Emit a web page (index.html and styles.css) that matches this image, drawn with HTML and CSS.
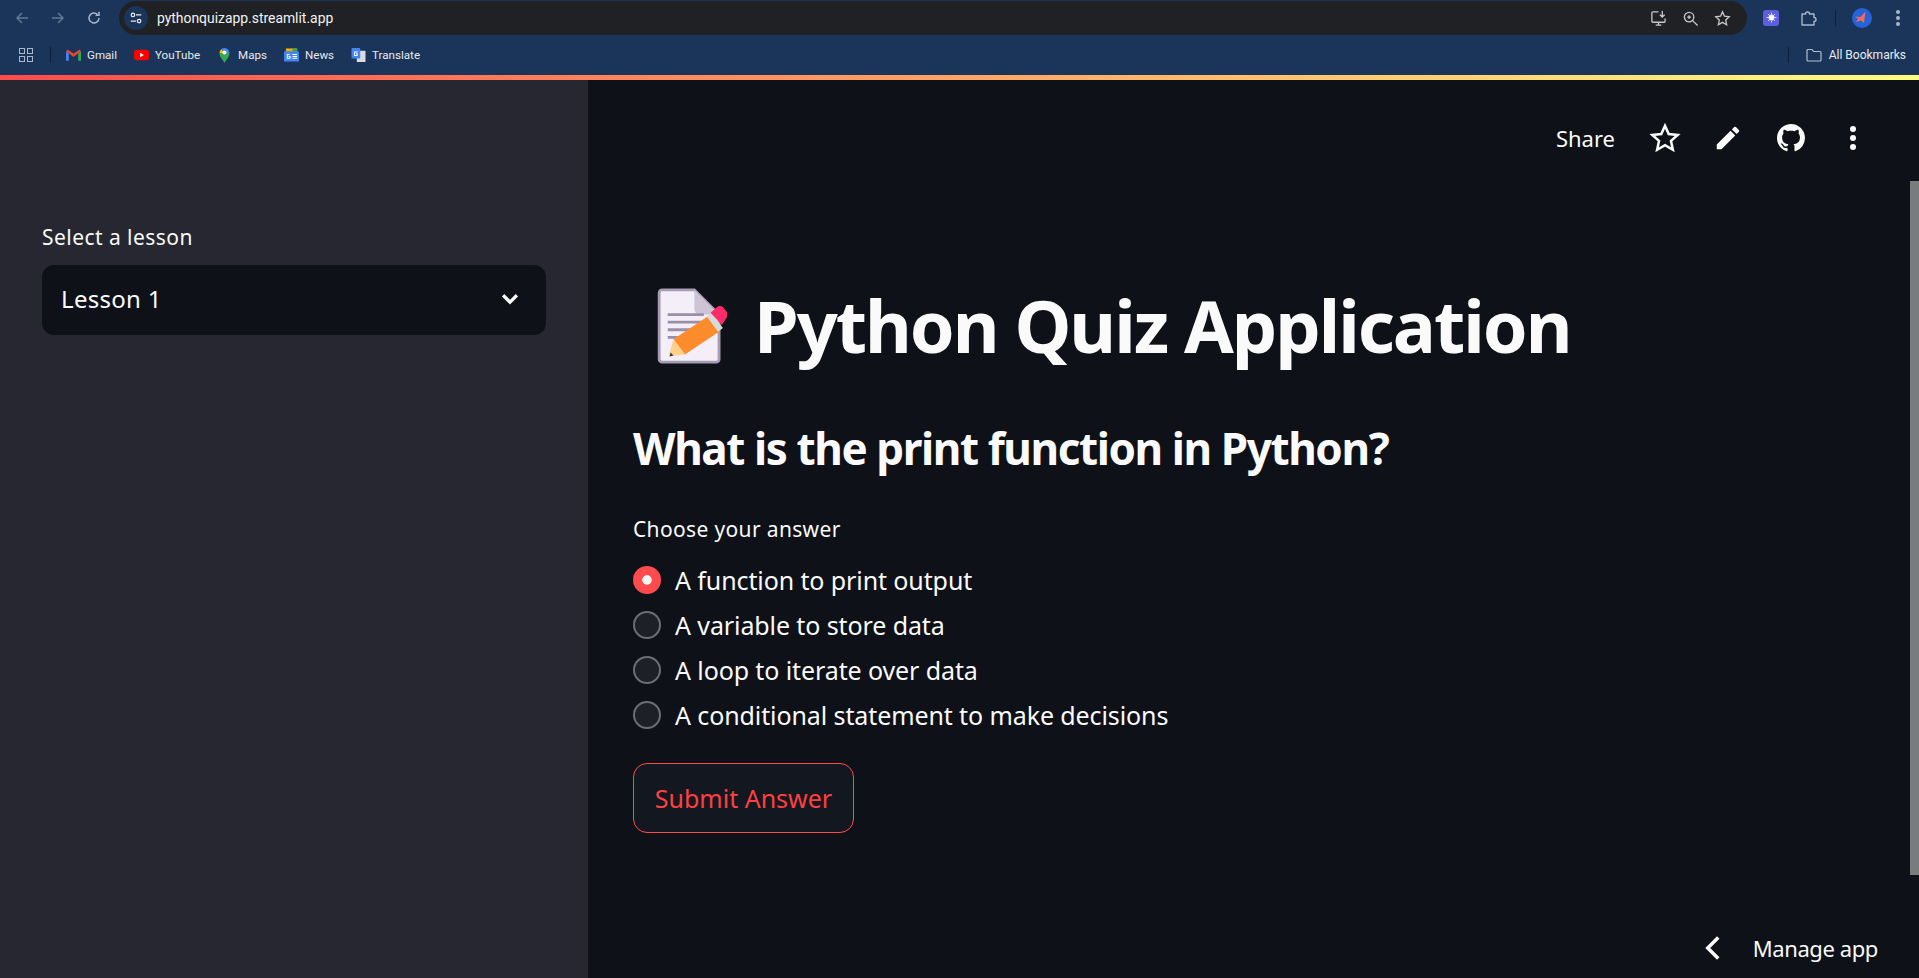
FILE: index.html
```html
<!DOCTYPE html>
<html lang="en">
<head>
    <meta charset="UTF-8">
    <title>Python Quiz Application</title>
    <link rel="stylesheet" href="styles.css">
</head>
<body>
    <div class="chrome">
        <div class="toolbar">
            <svg class="nav dim" viewBox="0 0 16 16"><path d="M14 8H3M8 3L3 8l5 5"/></svg>
            <svg class="nav dim" viewBox="0 0 16 16"><path d="M2 8h11M8 3l5 5-5 5"/></svg>
            <svg class="nav" viewBox="0 0 16 16"><path d="M13 8a5 5 0 1 1-1.6-3.7M13 1.800v3.400H9.600"/></svg>
            <div class="omnibox">
                <div class="tune">
                    <svg viewBox="0 0 16 16"><circle cx="4.500" cy="4.500" r="2"/><path d="M8 4.500h6M2 11.500h6"/><circle cx="11.500" cy="11.500" r="2"/></svg>
                </div>
                <span class="url">pythonquizapp.streamlit.app</span>
                <div class="omni-icons">
                    <svg viewBox="0 0 18 18"><path d="M9 2H3a1 1 0 0 0-1 1v9a1 1 0 0 0 1 1h12a1 1 0 0 0 1-1V9M13 1v6M10.500 5L13 7.500 15.500 5M6 16h6M9 13v3"/></svg>
                    <svg viewBox="0 0 18 18"><circle cx="7.500" cy="7.500" r="5"/><path d="M11 11l5.500 5.500M5.500 7.500h4M7.500 5.500v4"/></svg>
                    <svg viewBox="0 0 18 18"><path d="M9 2l2.100 4.600 5 .6-3.700 3.400 1 5L9 13.100 4.600 15.600l1-5L1.900 7.200l5-.6z"/></svg>
                </div>
            </div>
            <div class="ext-icon">
                <svg viewBox="0 0 16 16"><circle cx="8" cy="8" r="3.200"/><path d="M8 2v2.500M8 11.500V14M2 8h2.500M11.500 8H14M3.800 3.800l1.800 1.800M10.400 10.400l1.800 1.800M12.200 3.800l-1.800 1.800M5.600 10.400l-1.800 1.800"/></svg>
            </div>
            <svg class="puzzle" viewBox="0 0 18 18"><path d="M2 5h3.500a2 2 0 0 1 4 0H14v3.500a2 2 0 0 1 0 4V16H2v-3.500V5z"/></svg>
            <span class="sep"></span>
            <div class="avatar">
                <svg viewBox="0 0 20 20"><path d="M13.500 3.500L12 15l-3-2.500L4 14l2-3.500-3-2 5.500.5z"/></svg>
            </div>
            <div class="chrome-dots"><i></i><i></i><i></i></div>
        </div>
        <div class="bookmarks">
            <div class="apps"><i></i><i></i><i></i><i></i></div>
            <span class="sep"></span>
            <div class="bm">
                <svg viewBox="0 0 16 12"><path fill="#4285f4" d="M0 2v10h3V4z"/><path fill="#34a853" d="M13 4v8h3V2z"/><path fill="#ea4335" d="M0 2l8 6 8-6-1.500-2L8 4.500 1.500 0z"/></svg>
                Gmail
            </div>
            <div class="bm">
                <svg viewBox="0 0 16 12"><rect width="16" height="11" y="0.500" rx="3" fill="#f00"/><path fill="#fff" d="M6.500 3.500v5L10.500 6z"/></svg>
                YouTube
            </div>
            <div class="bm">
                <svg class="pin" viewBox="0 0 12 16"><path fill="#34a853" d="M6 16C4.500 13 1 10 1 6h10c0 4-3.500 7-5 10z"/><path fill="#fbbc04" d="M1 6a5 5 0 0 1 2-4l3 4z"/><path fill="#4285f4" d="M3 2a5 5 0 0 1 8 4H6z"/><circle cx="6" cy="5.500" r="2" fill="#fff"/></svg>
                Maps
            </div>
            <div class="bm">
                <svg viewBox="0 0 16 14"><path fill="#f9ab00" d="M2 0h12v4H2z"/><path fill="#34a853" d="M9 0h5v4H9z"/><rect y="3" width="16" height="11" rx="1" fill="#4285f4"/><path fill="#fff" d="M9 6h5v1H9zM9 8h5v1H9zM9 10h5v1H9zM3 6h3v1H4v3h2V9H5V8h2v3H3z"/></svg>
                News
            </div>
            <div class="bm">
                <svg viewBox="0 0 16 16"><rect x="6" y="3" width="10" height="13" rx="1" fill="#dadce0"/><rect width="10" height="12" rx="1" fill="#4285f4"/><path fill="#fff" d="M3 4h4v1H4v3h2V7H5V6h2v3H3z"/></svg>
                Translate
            </div>
            <div class="all-bm">
                <span class="sep"></span>
                <svg viewBox="0 0 16 14"><path d="M1 2.500a1 1 0 0 1 1-1h4l1.500 2H14a1 1 0 0 1 1 1V12a1 1 0 0 1-1 1H2a1 1 0 0 1-1-1z"/></svg>
                <span class="all-text">All Bookmarks</span>
            </div>
        </div>
    </div>
    <div class="decoration"></div>

    <div class="app">
        <aside class="sidebar">
            <label class="select-label">Select a lesson</label>
            <div class="select">
                <span>Lesson 1</span>
                <svg viewBox="0 0 16 16"><path d="M2.500 5L8 10.500 13.500 5"/></svg>
            </div>
        </aside>

        <main class="main">
            <div class="app-toolbar">
                <span class="share">Share</span>
                <svg class="tool-icon star" viewBox="0 0 24 24"><path d="M12 2.800l2.800 6.200 6.700.7-5 4.500 1.400 6.600-5.900-3.400-5.900 3.400 1.400-6.600-5-4.500 6.700-.7z"/></svg>
                <svg class="tool-icon pencil" viewBox="0 0 24 24"><path d="M3 17.250V21h3.750L17.810 9.940l-3.750-3.750L3 17.250zM20.710 7.040a1 1 0 0 0 0-1.410l-2.340-2.340a1 1 0 0 0-1.410 0l-1.830 1.830 3.750 3.750 1.830-1.830z"/></svg>
                <svg class="tool-icon github" viewBox="0 0 16 16"><path d="M8 0C3.580 0 0 3.580 0 8c0 3.540 2.290 6.530 5.470 7.590.4.070.55-.17.55-.38 0-.19-.01-.82-.01-1.490-2.010.37-2.530-.49-2.690-.94-.09-.23-.48-.94-.82-1.130-.28-.15-.68-.52-.01-.53.63-.01 1.080.58 1.230.82.72 1.210 1.870.87 2.330.66.070-.52.280-.87.510-1.070-1.780-.2-3.640-.89-3.640-3.950 0-.87.310-1.590.820-2.150-.080-.2-.360-1.020.080-2.120 0 0 .67-.21 2.200.82.640-.18 1.320-.27 2-.27s1.360.09 2 .27c1.530-1.040 2.200-.82 2.200-.82.440 1.100.160 1.920.080 2.120.51.560.820 1.270.820 2.150 0 3.070-1.870 3.750-3.650 3.950.290.250.540.730.540 1.480 0 1.070-.010 1.930-.010 2.200 0 .21.150.46.550.38A8.010 8.010 0 0 0 16 8c0-4.420-3.580-8-8-8z"/></svg>
                <div class="tool-dots"><i></i><i></i><i></i></div>
            </div>

            <div class="block">
                <h1 class="title">
                    <svg class="memo" viewBox="0 0 74 81">
                        <path d="M6 3h34l26 26v47a3 3 0 0 1-3 3H6a3 3 0 0 1-3-3V6a3 3 0 0 1 3-3z" fill="#f3eef8" stroke="#a79cb3" stroke-width="3"/>
                        <path d="M40 3v20a6 6 0 0 0 6 6h20z" fill="#cdc5d6"/>
                        <path d="M12 29h38M12 37h38M12 45h35M12 53h16" stroke="#9a8fa8" stroke-width="3"/>
                        <path d="M18 55L54 31l12 16-36 24z" fill="#ff8c2b"/>
                        <path d="M53 31l5-4 12 16-5 4z" fill="#d9d9d9"/>
                        <path d="M57 27l7-6q3-2 6 0l4 5q2 3 0 6l-5 8z" fill="#ff2d67"/>
                        <path d="M18 55l12 16-17 2z" fill="#ffd08a"/>
                        <path d="M15 69l3 3-4 1z" fill="#3a3a3a"/>
                    </svg>
                    <span>Python Quiz Application</span>
                </h1>
                <h2 class="question">What is the print function in Python?</h2>
                <p class="radio-label">Choose your answer</p>
                <div class="radio-group">
                    <div class="radio checked"><span class="dot"></span>A function to print output</div>
                    <div class="radio"><span class="dot"></span>A variable to store data</div>
                    <div class="radio"><span class="dot"></span>A loop to iterate over data</div>
                    <div class="radio"><span class="dot"></span>A conditional statement to make decisions</div>
                </div>
                <button class="submit" type="button">Submit Answer</button>
            </div>

            <div class="scrollbar"></div>
            <div class="manage">
                <svg viewBox="0 0 16 16"><path d="M11 2L5 8l6 6"/></svg>
                <span>Manage app</span>
            </div>
        </main>
    </div>
</body>
</html>
```

FILE: styles.css
```css
*{
    margin: 0;
    padding: 0;
    box-sizing: border-box;
}

html, body{
    height: 100%;
}

body{
    display: flex;
    flex-direction: column;
    overflow: hidden;
    background: #0e1117;
    color: #fafafa;
    font-family: 'Noto Sans', sans-serif;
}

/* browser chrome */
.chrome{
    height: 75px;
    flex: none;
    background: #1a3559;
    font-family: 'Roboto', sans-serif;
    color: #e8eaed;
}

.toolbar{
    height: 35px;
    display: flex;
    align-items: center;
    padding-left: 14px;
}

.nav{
    width: 16px;
    height: 16px;
    margin-right: 20px;
    fill: none;
    stroke: #a8b7cc;
    stroke-width: 1.500;
}
.nav.dim{
    stroke: #5f7896;
}

.omnibox{
    width: 1628px;
    height: 34px;
    align-self: flex-end;
    margin-left: -3px;
    margin-right: 16px;
    flex: none;
    display: flex;
    align-items: center;
    background: #202124;
    border-radius: 17px;
    padding-left: 5px;
}

.tune{
    width: 24px;
    height: 24px;
    border-radius: 50%;
    background: #1a3559;
    display: flex;
    align-items: center;
    justify-content: center;
}
.tune svg{
    width: 14px;
    height: 14px;
    fill: none;
    stroke: #e8eaed;
    stroke-width: 1.400;
}

.url{
    margin-left: 9px;
    font-size: 13.900px;
    color: #f1f3f4;
}

.omni-icons{
    margin-left: auto;
    margin-right: 16px;
    display: flex;
    gap: 15px;
}
.omni-icons svg{
    width: 17px;
    height: 17px;
    fill: none;
    stroke: #c7c7c7;
    stroke-width: 1.400;
}

.ext-icon{
    width: 16px;
    height: 16px;
    border-radius: 3px;
    background: #5b5fe0;
    display: flex;
    align-items: center;
    justify-content: center;
}
.ext-icon svg{
    width: 13px;
    height: 13px;
    fill: #fff;
    stroke: #fff;
}

.puzzle{
    width: 18px;
    height: 18px;
    margin-left: 21px;
    fill: none;
    stroke: #a8b7cc;
    stroke-width: 1.400;
    stroke-linejoin: round;
}

.sep{
    width: 1px;
    height: 16px;
    background: #0d1f3b;
    flex: none;
}
.toolbar .sep{
    margin-left: 17px;
}

.avatar{
    width: 20px;
    height: 20px;
    margin-left: 16px;
    border-radius: 50%;
    background: #2563d8;
}
.avatar svg{
    display: block;
    fill: #f06a5d;
}

.chrome-dots{
    margin-left: 24px;
    display: flex;
    flex-direction: column;
    gap: 2px;
}
.chrome-dots i{
    width: 4px;
    height: 4px;
    border-radius: 50%;
    background: #a8b7cc;
}

.bookmarks{
    height: 40px;
    padding: 0 13px 0 19px;
    display: flex;
    align-items: center;
    font-size: 11.600px;
}

.apps{
    width: 14px;
    display: grid;
    grid-template-columns: 6px 6px;
    gap: 2px;
    margin-right: 17px;
}
.apps i{
    height: 6px;
    border: 1px solid #a8b7cc;
}

.bm{
    display: flex;
    align-items: center;
    gap: 6px;
    margin-left: 17px;
}
.bookmarks .sep + .bm{
    margin-left: 15px;
}
.bm svg{
    width: 15px;
    height: 14px;
}
.bm .pin{
    height: 16px;
}

.all-bm{
    margin-left: auto;
    display: flex;
    align-items: center;
    gap: 7px;
}
.all-bm .sep{
    margin-right: 10px;
}
.all-bm svg{
    width: 16px;
    height: 14px;
    fill: none;
    stroke: #b4bfcd;
    stroke-width: 1.200;
}
.all-text{
    font-size: 12px;
}

.decoration{
    height: 5px;
    flex: none;
    background: linear-gradient(90deg, #ff4b4b, #fffd80);
}

/* streamlit layout */
.app{
    flex: 1;
    display: flex;
    min-height: 0;
}

.sidebar{
    width: 588px;
    flex: none;
    background: #262730;
    padding: 143px 42px 0;
}

.select-label{
    display: block;
    font-size: 21px;
    line-height: 28px;
    letter-spacing: .45px;
    margin-bottom: 14px;
}

.select{
    height: 70px;
    background: #0e1117;
    border-radius: 12px;
    display: flex;
    align-items: center;
    justify-content: space-between;
    padding: 0 26px 3px 19px;
    font-size: 24px;
    letter-spacing: .3px;
}
.select svg{
    width: 20px;
    height: 20px;
    fill: none;
    stroke: #fafafa;
    stroke-width: 2.600;
}

.main{
    flex: 1;
    position: relative;
    padding-left: 45px;
}

.app-toolbar{
    height: 116px;
    padding-right: 63px;
    display: flex;
    align-items: center;
    justify-content: flex-end;
}

.share{
    font-size: 22px;
    margin-right: 34px;
}

.tool-icon{
    fill: #fafafa;
}
.tool-icon.star{
    width: 32px;
    height: 32px;
    margin-right: 32px;
    fill: none;
    stroke: #fafafa;
    stroke-width: 1.900;
}
.tool-icon.pencil{
    width: 30px;
    height: 30px;
    margin-right: 34px;
}
.tool-icon.github{
    width: 28px;
    height: 28px;
    margin-right: 45px;
}

.tool-dots{
    display: flex;
    flex-direction: column;
    gap: 3px;
}
.tool-dots i{
    width: 6px;
    height: 6px;
    border-radius: 50%;
    background: #fafafa;
}

.block{
    padding-top: 86px;
}

.title{
    display: flex;
    align-items: center;
    gap: 27px;
    height: 86px;
    padding-left: 23px;
    font-size: 72px;
    font-weight: 700;
    letter-spacing: -2px;
    margin-bottom: 52px;
}
.memo{
    width: 71px;
    height: 77px;
    flex: none;
}

.question{
    font-size: 44px;
    font-weight: 700;
    line-height: 56px;
    letter-spacing: -1.400px;
    margin-bottom: 39px;
}

.radio-label{
    font-size: 21px;
    line-height: 28px;
    letter-spacing: .35px;
    margin-bottom: 15px;
}

.radio-group{
    display: flex;
    flex-direction: column;
    gap: 1px;
}

.radio{
    height: 44px;
    display: flex;
    align-items: center;
    gap: 14px;
    font-size: 25px;
    letter-spacing: -.1px;
}

.dot{
    width: 28px;
    height: 28px;
    border-radius: 50%;
    background: #1e2028;
    border: 2px solid #6c6e76;
    flex: none;
}
.radio.checked .dot{
    background: #ff4b4b;
    border: 9px solid #ff4b4b;
    box-shadow: inset 0 0 0 5px #f5f5f5;
}

.submit{
    display: block;
    width: 221px;
    height: 70px;
    margin-top: 26px;
    background: #13171f;
    border: 1px solid #ff4b4b;
    border-radius: 14px;
    color: #ff4040;
    font-family: inherit;
    font-size: 25px;
}

.scrollbar{
    position: absolute;
    right: 0;
    top: 101px;
    width: 9px;
    height: 694px;
    background: #7a7b7f;
}

.manage{
    position: absolute;
    right: 41px;
    bottom: 15px;
    display: flex;
    align-items: center;
    gap: 26px;
    font-size: 22px;
    letter-spacing: -.4px;
}
.manage svg{
    width: 28px;
    height: 28px;
    fill: none;
    stroke: #fafafa;
    stroke-width: 2;
}
```
